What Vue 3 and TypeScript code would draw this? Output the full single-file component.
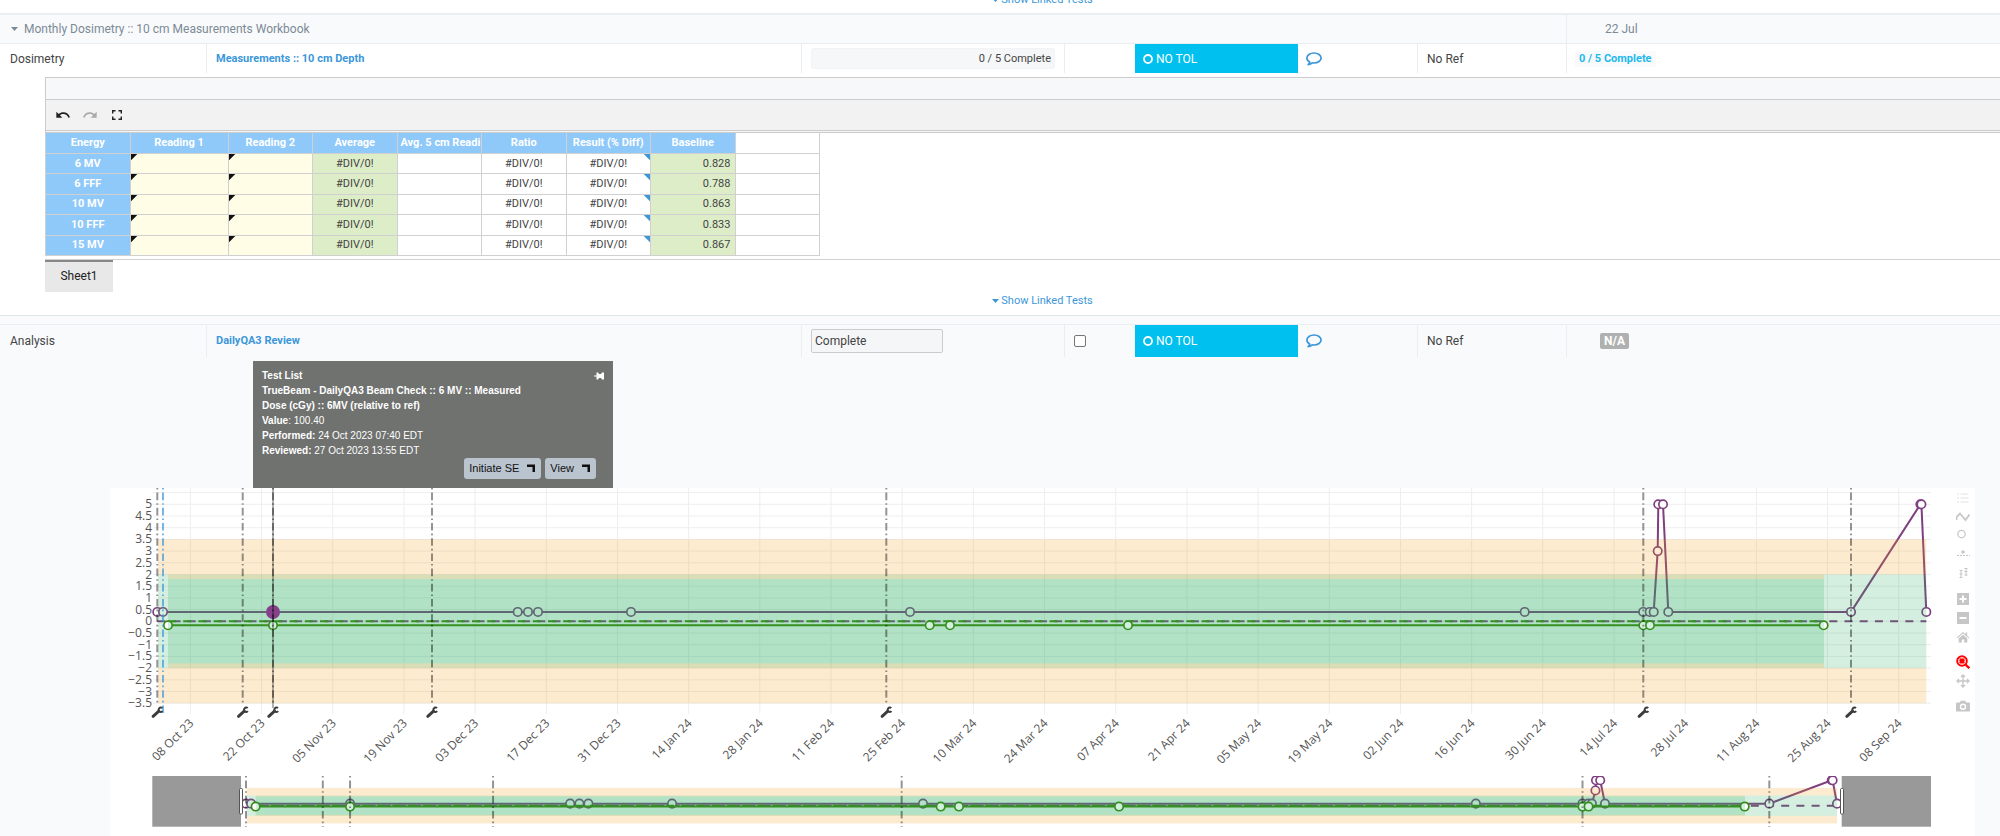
<script setup lang="ts">
interface Point { x: number; y: number }
interface Icon { label: string; kind: string; tone: string }

const headings = ['Energy', 'Reading 1', 'Reading 2', 'Average', 'Avg. 5 cm Readi', 'Ratio', 'Result (% Diff)', 'Baseline']
const rows = [
  { energy: '6 MV', baseline: '0.828' },
  { energy: '6 FFF', baseline: '0.788' },
  { energy: '10 MV', baseline: '0.863' },
  { energy: '10 FFF', baseline: '0.833' },
  { energy: '15 MV', baseline: '0.867' },
]

/* Chart space: one unit is one pixel at the default window width. */
const ZERO = 133.3
const UNIT = 23.4
const yMain = (v: number) => ZERO - v * UNIT
const xMini = (x: number) => 136 + (x - 47.3) * 0.8994
const yMini = (v: number) => 317.7 - v * 5.08

const dates = ['08 Oct 23', '22 Oct 23', '05 Nov 23', '19 Nov 23', '03 Dec 23', '17 Dec 23', '31 Dec 23', '14 Jan 24', '28 Jan 24', '11 Feb 24', '25 Feb 24', '10 Mar 24', '24 Mar 24', '07 Apr 24', '21 Apr 24', '05 May 24', '19 May 24', '02 Jun 24', '16 Jun 24', '30 Jun 24', '14 Jul 24', '28 Jul 24', '11 Aug 24', '25 Aug 24', '08 Sep 24']
const ticks = dates.map((label, i) => ({ label, x: 80.4 + i * 71.18 }))
const levels = Array.from({ length: 18 }, (_, i) => 5 - i * 0.5)
const fmt = (v: number) => String(v).replace('-', '−')

const measured: Point[] = [
  { x: 47.3, y: 0.4 }, { x: 53, y: 0.4 }, { x: 163, y: 0.4 }, { x: 407.7, y: 0.4 }, { x: 418, y: 0.4 },
  { x: 428, y: 0.4 }, { x: 521, y: 0.4 }, { x: 800, y: 0.4 }, { x: 1414.7, y: 0.4 }, { x: 1533.2, y: 0.4 },
  { x: 1539.7, y: 0.4 }, { x: 1543.7, y: 0.4 }, { x: 1547.7, y: 3 }, { x: 1548.3, y: 5 }, { x: 1553, y: 5 },
  { x: 1558.3, y: 0.4 }, { x: 1741, y: 0.4 }, { x: 1810.4, y: 5 }, { x: 1811.4, y: 5 }, { x: 1816.3, y: 0.4 },
]
const relative: Point[] = [58, 163, 819.7, 840, 1018, 1533.3, 1540, 1713.6].map((x) => ({ x, y: -0.17 }))
const events = [47.3, 132.7, 163, 322, 776.3, 1533.3, 1741]

const mainOf = (list: Point[]) => list.map((p) => ({ x: p.x, y: yMain(p.y) }))
const miniOf = (list: Point[]) => list.map((p) => ({ x: xMini(p.x), y: yMini(p.y) }))
const line = (list: Point[]) => list.map((p) => `${p.x.toFixed(1)},${p.y.toFixed(1)}`).join(' ')

function scene(id: string, fx: (x: number) => number, fy: (v: number) => number, a: Point[], b: Point[]) {
  const band = (x0: number, x1: number, hi: number, lo: number, cls: string) => ({
    x: fx(x0), y: fy(hi), width: fx(x1) - fx(x0), height: fy(lo) - fy(hi), cls,
  })
  return {
    id,
    zero: fy(0),
    series: [
      {
        cls: 'measured', points: a, from: fx(47.3), to: fx(1816.3),
        bands: [band(48, 1816.3, 3.5, 2, 'warn'), band(48, 1816.3, 2, -2, 'ok'), band(48, 1816.3, -2, -3.5, 'warn')],
      },
      {
        cls: 'relative', points: b, from: fx(58), to: fx(1713.6),
        bands: [band(58, 1714, 2, 1.8, 'warn'), band(58, 1714, 1.8, -1.8, 'ok'), band(58, 1714, -1.8, -2, 'warn')],
      },
    ],
  }
}
const scenes = [
  scene('main', (x) => x, yMain, mainOf(measured), mainOf(relative)),
  scene('mini', xMini, yMini, miniOf(measured), miniOf(relative)),
]

const tools: Icon[][] = [
  [
    { label: 'Toggle legend', kind: 'list', tone: 'faint' },
    { label: 'Toggle lines', kind: 'zigzag', tone: 'plain' },
    { label: 'Toggle markers', kind: 'ring', tone: 'plain' },
    { label: 'Toggle reference', kind: 'reference', tone: 'plain' },
    { label: 'Toggle tolerances', kind: 'bars', tone: 'plain' },
  ],
  [
    { label: 'Zoom in', kind: 'plus', tone: 'plain' },
    { label: 'Zoom out', kind: 'minus', tone: 'plain' },
    { label: 'Reset axes', kind: 'home', tone: 'plain' },
  ],
  [
    { label: 'Zoom', kind: 'lens', tone: 'active' },
    { label: 'Pan', kind: 'pan', tone: 'plain' },
  ],
  [{ label: 'Download plot', kind: 'camera', tone: 'plain' }],
]
</script>

<template>
  <main class="page">
    <div class="linked linked-top">
      <a href="#"><svg width="7" height="4" viewBox="0 0 7 4"><path d="M0 0H7L3.5 4Z" fill="currentColor" /></svg>Show Linked Tests</a>
    </div>

    <header class="row group">
      <div class="group-name">
        <svg width="7" height="4" viewBox="0 0 7 4"><path d="M0 0H7L3.5 4Z" fill="currentColor" /></svg>
        <span>Monthly Dosimetry :: 10 cm Measurements Workbook</span>
      </div>
      <div class="cell date">22 Jul</div>
    </header>

    <section class="row test">
      <div class="cell first">Dosimetry</div>
      <div class="cell"><a class="name" href="#">Measurements :: 10 cm Depth</a></div>
      <div class="cell"><input class="progress" type="text" readonly value="0 / 5 Complete" aria-label="Measurements progress" /></div>
      <div class="cell"></div>
      <div class="status"><svg width="10" height="10" viewBox="0 0 10 10"><circle cx="5" cy="5" r="4" fill="none" stroke="currentColor" stroke-width="1.8" /></svg>NO TOL</div>
      <div class="comment">
        <button type="button" aria-label="Add comment">
          <svg width="16" height="14" viewBox="0 0 16 14"><path d="M8 1C4 1 .9 3.2.9 6c0 1.700 1.100 3.100 2.800 4-.2 1-.7 1.900-1.500 2.700 1.600-.2 3-.8 4-1.800.6.1 1.200.1 1.800.1 4 0 7.100-2.200 7.100-5S12 1 8 1Z" fill="none" stroke="currentColor" stroke-width="1.700" stroke-linejoin="round" /></svg>
        </button>
      </div>
      <div class="cell">No Ref</div>
      <div class="cell"><span class="summary">0 / 5 Complete</span></div>
    </section>

    <section class="workbook">
      <div class="formula"></div>
      <div class="toolbar">
        <button type="button" aria-label="Undo"><svg width="16" height="16" viewBox="0 0 24 24"><path fill="currentColor" d="M12.500 8c-2.650 0-5.050.99-6.900 2.600L2 7v9h9l-3.620-3.620c1.390-1.160 3.160-1.880 5.120-1.880 3.540 0 6.550 2.310 7.600 5.500l2.370-.78C21.080 11.030 17.150 8 12.500 8z" /></svg></button>
        <button type="button" aria-label="Redo" disabled><svg width="16" height="16" viewBox="0 0 24 24"><path fill="currentColor" d="M18.400 10.600C16.550 8.990 14.150 8 11.500 8c-4.650 0-8.580 3.030-9.960 7.220L3.900 16c1.050-3.190 4.050-5.500 7.600-5.500 1.950 0 3.730.72 5.120 1.880L13 16h9V7l-3.600 3.600z" /></svg></button>
        <button type="button" aria-label="Full screen"><svg width="16" height="16" viewBox="0 0 16 16"><path d="M3.700 6.500V3.700H6.500M9.500 3.700H12.300V6.500M12.300 9.500V12.300H9.500M6.500 12.300H3.700V9.500" fill="none" stroke="currentColor" stroke-width="1.400" /></svg></button>
      </div>
      <div class="sheet">
        <table>
          <colgroup><col /><col class="wide" /><col v-for="n in 7" :key="n" /></colgroup>
          <thead>
            <tr><th v-for="h in headings" :key="h" scope="col">{{ h }}</th><td></td></tr>
          </thead>
          <tbody>
            <tr v-for="r in rows" :key="r.energy">
              <th scope="row">{{ r.energy }}</th>
              <td class="entry"></td>
              <td class="entry"></td>
              <td class="calc">#DIV/0!</td>
              <td></td>
              <td>#DIV/0!</td>
              <td class="noted">#DIV/0!</td>
              <td class="calc number">{{ r.baseline }}</td>
              <td></td>
            </tr>
          </tbody>
        </table>
      </div>
      <button type="button" class="tab">Sheet1</button>
    </section>

    <div class="linked">
      <a href="#"><svg width="7" height="4" viewBox="0 0 7 4"><path d="M0 0H7L3.5 4Z" fill="currentColor" /></svg>Show Linked Tests</a>
    </div>

    <div class="analysis">
      <section class="row test review">
        <div class="cell first">Analysis</div>
        <div class="cell"><a class="name" href="#">DailyQA3 Review</a></div>
        <div class="cell"><input class="answer" type="text" value="Complete" aria-label="DailyQA3 Review result" /></div>
        <div class="cell"><input class="skip" type="checkbox" aria-label="Skip DailyQA3 Review" /></div>
        <div class="status"><svg width="10" height="10" viewBox="0 0 10 10"><circle cx="5" cy="5" r="4" fill="none" stroke="currentColor" stroke-width="1.8" /></svg>NO TOL</div>
        <div class="comment">
          <button type="button" aria-label="Add comment">
            <svg width="16" height="14" viewBox="0 0 16 14"><path d="M8 1C4 1 .9 3.2.9 6c0 1.700 1.100 3.100 2.800 4-.2 1-.7 1.900-1.500 2.700 1.600-.2 3-.8 4-1.800.6.1 1.200.1 1.800.1 4 0 7.100-2.200 7.100-5S12 1 8 1Z" fill="none" stroke="currentColor" stroke-width="1.700" stroke-linejoin="round" /></svg>
          </button>
        </div>
        <div class="cell">No Ref</div>
        <div class="cell"><span class="badge">N/A</span></div>
      </section>

      <div class="panel">
        <aside class="tooltip" aria-label="Selected point">
          <svg class="pin" width="10" height="8" viewBox="0 0 10 8"><path d="M0 3.500H2.500V.5H4L5 2H7L8 .5H10V7.500H8L7 6H5L4 7.500H2.500V4.500H0Z" fill="currentColor" /></svg>
          <p><b>Test List</b></p>
          <p><b>TrueBeam - DailyQA3 Beam Check :: 6 MV :: Measured</b></p>
          <p><b>Dose (cGy) :: 6MV (relative to ref)</b></p>
          <p><b>Value</b>: 100.40</p>
          <p><b>Performed:</b> 24 Oct 2023 07:40 EDT</p>
          <p><b>Reviewed:</b> 27 Oct 2023 13:55 EDT</p>
          <div class="actions">
            <button v-for="t in ['Initiate SE', 'View']" :key="t" type="button">{{ t }}<svg width="8" height="9" viewBox="0 0 8 9"><path d="M0 .5H8V8H5.500V3H0Z" fill="currentColor" /></svg></button>
          </div>
        </aside>

        <svg class="chart" viewBox="0 0 1835 348" role="img" aria-label="DailyQA3 trend">
          <defs>
            <clipPath id="clip-main"><rect x="0" y="0" width="1835" height="270" /></clipPath>
            <clipPath id="clip-mini"><rect x="42" y="288" width="1779" height="51" /></clipPath>
          </defs>

          <g class="grid">
            <line v-for="t in ticks" :key="t.label" :x1="t.x" :x2="t.x" y1="0" y2="226" />
            <line x1="43" x2="1821" :y1="yMain(5.5)" :y2="yMain(5.5)" />
            <line v-for="v in levels" :key="v" x1="43" x2="1821" :y1="yMain(v)" :y2="yMain(v)" />
          </g>

          <g class="labels">
            <text v-for="v in levels" :key="v" x="42" :y="yMain(v) + 4" text-anchor="end">{{ fmt(v) }}</text>
            <text v-for="t in ticks" :key="t.label" text-anchor="end" :transform="`translate(${t.x + 4} 236) rotate(-45)`">{{ t.label }}</text>
          </g>

          <g v-for="s in scenes" :key="s.id" :clip-path="`url(#clip-${s.id})`">
            <g v-for="q in s.series" :key="q.cls">
              <g :class="q.cls">
                <line class="baseline" :x1="q.from" :x2="q.to" :y1="s.zero" :y2="s.zero" />
                <polyline :points="line(q.points)" />
                <circle v-for="p in q.points" :key="p.x" :cx="p.x" :cy="p.y" r="4.200" />
              </g>
              <rect v-for="b in q.bands" :key="b.y" :x="b.x" :y="b.y" :width="b.width" :height="b.height" :class="b.cls" />
            </g>
          </g>

          <circle class="picked" cx="163" :cy="yMain(0.4)" r="7" />

          <g class="events">
            <line v-for="x in events" :key="x" :x1="x" :x2="x" y1="0" y2="217" />
            <line class="now" x1="53" x2="53" y1="0" y2="226" />
            <line class="cursor" x1="163" x2="163" y1="0" y2="220" />
            <line v-for="x in events" :key="-x" :x1="xMini(x)" :x2="xMini(x)" y1="288" y2="339" />
          </g>

          <g v-for="x in events" :key="x" class="wrench" :transform="`translate(${x} 224)`">
            <path d="M-4.200 4.300L1.500-.8" stroke-width="3" stroke-linecap="round" />
            <path d="M5-3.900A2.200 2.200 0 1 0 5.200-.8" stroke-width="2" />
          </g>

          <g class="slider">
            <rect class="mask" x="42.300" y="288" width="88.700" height="50.700" />
            <rect class="mask" x="1731.700" y="288" width="89.300" height="50.700" />
            <rect class="grip" x="129.500" y="300.500" width="3" height="25.500" rx="1" />
            <rect class="grip" x="1730.500" y="300.500" width="3" height="25.500" rx="1" />
          </g>
        </svg>

        <div class="modebar">
          <div v-for="(g, i) in tools" :key="i" class="tool-group">
            <button v-for="t in g" :key="t.kind" type="button" :class="t.tone" :aria-label="t.label">
              <svg width="14" height="14" viewBox="0 0 14 14" fill="none" stroke="currentColor">
                <path v-if="t.kind === 'list'" d="M1 3H3M1 7H3M1 11H3M4.500 3H12.500M4.500 7H12.500M4.500 11H12.500" />
                <path v-else-if="t.kind === 'zigzag'" d="M.5 10V7L4 3.500L9.500 10L13.500 4.500" stroke-width="1.800" />
                <circle v-else-if="t.kind === 'ring'" cx="5.500" cy="5" r="3.700" stroke-width="1.200" />
                <g v-else-if="t.kind === 'reference'"><circle cx="7" cy="4" r="1.700" fill="currentColor" stroke="none" /><path d="M1 7.500H14" stroke-dasharray="2 1" /></g>
                <path v-else-if="t.kind === 'bars'" d="M5 3V10.500M3.500 3.500H6.500M3.500 7H6.500M3.500 10.500H6.500M10 1V8.500M8.500 1.500H11.500M8.500 4.500H11.500M8.500 8H11.500" />
                <g v-else-if="t.kind === 'plus'"><rect x="1" y="1" width="12" height="12" fill="currentColor" stroke="none" /><path d="M7 3.500V10.500M3.500 7H10.500" stroke="#fff" stroke-width="2" /></g>
                <g v-else-if="t.kind === 'minus'"><rect x="1" y="1" width="12" height="12" fill="currentColor" stroke="none" /><path d="M3.500 7H10.500" stroke="#fff" stroke-width="2" /></g>
                <path v-else-if="t.kind === 'home'" d="M.8 7.600L7 2L9.500 4.200V2.500H11.200V5.700L13.300 7.600L12.600 8.300L7 3.500L1.500 8.300ZM2.700 8.500L7 4.700L11.300 8.500V12.500H8.200V9.500H5.800V12.500H2.700Z" fill="currentColor" stroke="none" />
                <g v-else-if="t.kind === 'lens'"><circle cx="6" cy="6" r="4.800" stroke-width="2" /><rect x="3.700" y="3.700" width="4.600" height="4.600" fill="currentColor" stroke-width=".8" stroke-dasharray="1 1" /><path d="M9.500 9.500L13.300 13.200" stroke-width="2.400" /></g>
                <path v-else-if="t.kind === 'pan'" d="M7 1.500V12.500M1.500 7H12.500M5 3L7 1L9 3M5 11L7 13L9 11M3 5L1 7L3 9M11 5L13 7L11 9" stroke-width="1.300" />
                <g v-else><path d="M1 3.500H3.800L4.800 1.800H9.200L10.200 3.500H13Q14 3.500 14 4.500V11.500Q14 12.500 13 12.500H1Q0 12.500 0 11.500V4.500Q0 3.500 1 3.500Z" fill="currentColor" stroke="none" /><circle cx="7" cy="7.800" r="2.500" stroke="#fff" stroke-width="1.400" /></g>
              </svg>
            </button>
          </div>
        </div>
      </div>
    </div>
  </main>
</template>

<style>
body { margin: 0; background: #f9fafc; }
</style>

<style scoped>
* { box-sizing: border-box; }
.page {
  overflow: hidden;
  background: #fff;
  color: #444;
  font: 12px/18px Roboto, "Liberation Sans", sans-serif;
}
button, input { font: inherit; color: inherit; }
button { margin: 0; padding: 0; border: 0; background: none; cursor: pointer; }
a { color: #3c97d9; text-decoration: none; }
svg { display: block; flex: none; }

.linked { display: flex; justify-content: center; padding: 0 0 5px 85px; font-size: 11px; }
.linked a { display: flex; align-items: center; gap: 2px; }
.linked-top { height: 13px; align-items: flex-end; padding-bottom: 4px; }
.linked-top a { flex: none; }

.row {
  display: grid;
  grid-template-columns: 206fr 595fr 263fr 71fr 163fr 119fr 149fr 434fr;
}
.row > * { min-width: 0; display: flex; align-items: center; }
.group { height: 31px; border-top: 2px solid #e9eef2; border-bottom: 1px solid #e9edf0; background: #f9fafc; color: #7c8a96; }
.group-name { grid-column: 1 / 8; padding-left: 11px; gap: 6px; }
.cell { border-left: 1px solid #ebeef0; padding: 0 9px; }
.cell.first { border-left: 0; padding-left: 10px; }
.cell.date { padding-left: 38px; }
.cell:last-child:not(.date) { padding-left: 8px; }
.test { height: 29px; }
.name { font-size: 11px; font-weight: 700; }
.progress { width: 246px; height: 21px; padding: 0 3px; border: 1px solid #f1f3f5; border-radius: 3px; background: #f6f7f9; font-size: 11px; text-align: right; outline: 0; }
.status { gap: 3px; padding-left: 8px; background: #00c0ef; color: #fff; }
.comment { padding-left: 8px; color: #3c97d9; }
.summary { padding: 0 4px; line-height: 16px; background: #f9fafc; color: #1cb9ec; font-size: 11px; font-weight: 700; }

.workbook { margin: 4px 0 0 45px; border-top: 1px solid #ccc; }
.formula { height: 21px; border-left: 1px solid #ccc; background: #f7f8fa; }
.toolbar { display: flex; align-items: center; gap: 11px; height: 34px; padding: 0 9px 2px; border: solid #ccc; border-width: 1px 0 1px 1px; background: #f2f2f2; box-shadow: inset 0 -1px #f5f5f5, inset 0 -2px #ccc; color: #222; }
.toolbar button:disabled { color: #aaa; }
.sheet { height: 127px; border-bottom: 1px solid #d0d0d0; }
table { width: 775px; height: 123px; table-layout: fixed; border-collapse: separate; border-spacing: 0; border-left: 1px solid #d0d0d0; }
col.wide { width: 98px; }
th, td { overflow: hidden; padding: 0 3px; border: solid #d0d0d0; border-width: 0 1px 1px 0; font-size: 11px; line-height: 18px; text-align: center; white-space: nowrap; }
th { background: #8fc9f9; color: #fff; font-weight: 700; }
thead th, thead td { height: 21px; }
.entry { background: linear-gradient(135deg, #111 4px, transparent 5px) #fffde6; }
.calc { background: #dcedc8; }
.noted { background: linear-gradient(225deg, #3c97d9 4px, transparent 5px); }
.number { padding-right: 4px; text-align: right; }
.tab { display: block; width: 68px; height: 32px; padding-bottom: 2px; border-top: 2px solid #888; background: #e8e8e8; color: #222; }

.analysis { border-top: 1px solid #dfe6e8; background: #f9fafc; padding-top: 8px; }
.review { height: 33px; border-top: 1px solid #ebeef0; }
.answer { width: 132px; height: 24px; padding: 0 3px; border: 1px solid #ccc; border-radius: 2px; background: #f5f6f7; }
.skip { appearance: none; width: 12px; height: 12px; margin: 0; border: 1px solid #767676; border-radius: 2px; background: #fff; }
.badge { margin-left: 25px; padding: 0 4px; border-radius: 2px; background: #b0b0b0; color: #fff; font-weight: 700; line-height: 16px; }

.panel { position: relative; display: flex; align-items: flex-start; margin: 131px 25px 0 110px; background: #fff; }
.chart { flex: 1; min-width: 0; }
.grid line { stroke: #eee; }
.labels { fill: #555; font: 12px "Open Sans", "Noto Sans", sans-serif; }
.measured { stroke: #7f3f7f; }
.relative { stroke: #398712; }
polyline { fill: none; stroke-width: 2; }
.measured circle, .relative circle { fill: #fff; stroke-width: 1.7; }
.baseline { stroke-width: 2; stroke-dasharray: 8 7.2; }
.warn { fill: #f39c12; fill-opacity: 0.2; }
.ok { fill: #27ae60; fill-opacity: 0.2; }
.picked { fill: #86408a; }
.events line { stroke: #000; stroke-opacity: 0.42; stroke-width: 2; stroke-dasharray: 7.6 3 1.6 3; stroke-dashoffset: 10.6; }
.events .now { stroke: #3c97d9; stroke-opacity: 0.7; }
.events .cursor { stroke-dasharray: none; stroke-width: 1; stroke-opacity: 0.6; }
.wrench { fill: none; stroke: #3c3c3c; }
.mask { fill: #999; }
.grip { fill: #fff; stroke: #555; }

.modebar { flex: none; width: 30px; padding-left: 10px; }
.tool-group { margin-bottom: 6px; }
.tool-group button { display: flex; align-items: center; justify-content: center; width: 16px; height: 19px; color: #c6c6c6; }
.tool-group .faint { color: #e2e2e2; }
.tool-group .active { color: #f00; }

.tooltip {
  position: absolute;
  bottom: 100%;
  left: 143px;
  width: 360px;
  height: 127px;
  padding: 7px 9px;
  background: #70726f;
  color: #fff;
  font: 10px/15px "Liberation Sans", Arial, sans-serif;
}
.tooltip p { margin: 0; }
.pin { position: absolute; top: 11px; right: 9px; }
.actions { display: flex; justify-content: flex-end; gap: 4px; padding-right: 8px; }
.actions button { display: flex; gap: 8px; height: 21px; padding: 0 6px 0 5px; align-items: center; border-radius: 3px; background: #b9c4ce; color: #111; font-size: 11px; }
</style>
